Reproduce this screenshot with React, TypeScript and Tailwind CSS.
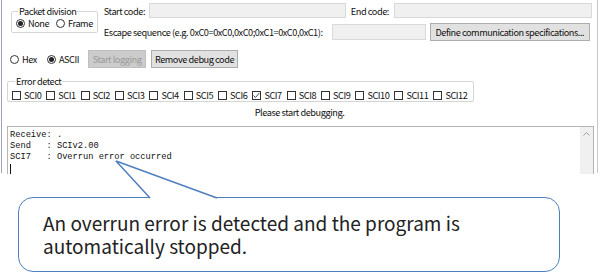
import { ReactNode } from "react";

function Radio({ checked, label }: { checked?: boolean; label: string }) {
    return (
        <div className="flex items-center gap-[3px]">
            <span className="w-[9px] h-[9px] rounded-full border border-[#333] bg-white flex items-center justify-center">
                {checked && <span className="w-[5px] h-[5px] rounded-full bg-[#222]" />}
            </span>
            <span>{label}</span>
        </div>
    );
}

function Check({ checked, label }: { checked?: boolean; label: string }) {
    return (
        <div className="flex items-center gap-[3px]">
            <span className="w-[9px] h-[9px] border border-[#333] bg-white flex items-center justify-center">
                {checked && (
                    <svg width="7" height="7" viewBox="0 0 7 7">
                        <path d="M0.5 3.5 L2.5 5.5 L6.5 0.8" fill="none" stroke="#333" strokeWidth="0.9" />
                    </svg>
                )}
            </span>
            <span>{label}</span>
        </div>
    );
}

function Button({ children, disabled, className }: { children: ReactNode; disabled?: boolean; className?: string }) {
    return (
        <div
            className={
                "flex items-center justify-center border " +
                (disabled ? "bg-[#cccccc] border-[#bfbfbf] text-[#9a9a9a] " : "bg-[#e1e1e1] border-[#adadad] text-[#111] ") +
                (className ?? "")
            }
        >
            {children}
        </div>
    );
}

const channels = ["SCI0", "SCI1", "SCI2", "SCI3", "SCI4", "SCI5", "SCI6", "SCI7", "SCI8", "SCI9", "SCI10", "SCI11", "SCI12"];

export default function App() {
    return (
        <div className="relative w-[600px] h-[273px] overflow-hidden bg-white whitespace-nowrap font-['Noto_Sans_CJK_JP',sans-serif] text-[9.2px] tracking-[-0.45px] leading-[12px] text-[#111]">
            {/* window */}
            <div className="ml-[1px] w-[597px] h-[173px] border-x border-l-[#9aa6b8] border-r-[#c8c8c8] flex flex-col">
                <div className="flex">
                    <fieldset className="ml-[9px] mt-[6px] w-[86px] h-[27px] border border-[#d5d5d5] rounded-[2px] px-[4px]">
                        <legend className="ml-[2px] px-[1px] leading-[11px]">Packet division</legend>
                        <div className="flex gap-[7px]">
                            <Radio checked label="None" />
                            <Radio label="Frame" />
                        </div>
                    </fieldset>
                    <div className="ml-[6px] flex flex-col">
                        <div className="flex items-center h-[15px] mt-[3px]">
                            <span className="w-[45px]">Start code:</span>
                            <div className="w-[197px] h-[15px] bg-[#f0f0f0] border border-[#d9d9d9]" />
                            <span className="ml-[5px] w-[43px]">End code:</span>
                            <div className="w-[198px] h-[15px] bg-[#f0f0f0] border border-[#d9d9d9]" />
                        </div>
                        <div className="flex items-center h-[18px] mt-[5px]">
                            <span className="w-[228px]">Escape sequence (e.g. 0xC0=0xC0,0xC0;0xC1=0xC0,0xC1):</span>
                            <div className="w-[94px] h-[16px] bg-[#f0f0f0] border border-[#d9d9d9]" />
                            <Button className="ml-[4px] w-[160px] h-[18px]">Define communication specifications...</Button>
                        </div>
                    </div>
                </div>
                <div className="flex items-center mt-[9px] ml-[8px] h-[18px]">
                    <Radio label="Hex" />
                    <div className="ml-[10px]">
                        <Radio checked label="ASCII" />
                    </div>
                    <Button disabled className="ml-[9px] w-[58px] h-[18px]">Start logging</Button>
                    <Button className="ml-[5px] w-[87px] h-[18px]">Remove debug code</Button>
                </div>
                <fieldset className="ml-[5px] mt-[7px] w-[467px] h-[28px] border border-[#d5d5d5] rounded-[2px] px-[4px]">
                    <legend className="ml-[3px] px-[1px]">Error detect</legend>
                    <div className="flex gap-[5px] mt-[2px]">
                        {channels.map((c) => (
                            <Check key={c} checked={c === "SCI7"} label={c} />
                        ))}
                    </div>
                </fieldset>
                <div className="text-center mt-[4px] h-[12px]">Please start debugging.</div>
                <div className="ml-[5px] mt-[8px] w-[587px] flex-1 border-t border-x border-[#b4b4b4] flex tracking-normal">
                    <div className="flex-1 pl-[2px] pt-[3px] font-['Liberation_Mono',monospace] text-[8.7px] leading-[11px] text-[#111] whitespace-pre">
                        <div>Receive: .</div>
                        <div>Send   : SCIv2.00</div>
                        <div>SCI7   : Overrun error occurred</div>
                        <div className="w-[1px] h-[10px] bg-[#111] mt-[1px]" />
                    </div>
                    <div className="w-[13px] bg-[#f0f0f0] flex justify-center pt-[5px]">
                        <svg width="7" height="4" viewBox="0 0 7 4">
                            <path d="M0.5 3.5 L3.5 0.5 L6.5 3.5" fill="none" stroke="#a0a0a0" strokeWidth="1" />
                        </svg>
                    </div>
                </div>
            </div>

            {/* callout */}
            <div className="ml-[18px] mt-[24px] w-[542px] h-[75px] border-[1.5px] border-[#4f7fc0] rounded-[15px] pl-[24px] pt-[13px] font-['Noto_Sans_CJK_JP',sans-serif] text-[19px] tracking-normal leading-[23px] text-[#222]">
                An overrun error is detected and the program is
                <br />
                automatically stopped.
            </div>
            <svg className="absolute left-0 top-0 pointer-events-none" width="600" height="273">
                <polygon points="116,161 150,198.5 217,198.5" fill="white" />
                <polyline points="150,198 116,161 217,198" fill="none" stroke="#4f7fc0" strokeWidth="1.5" />
            </svg>
        </div>
    );
}
